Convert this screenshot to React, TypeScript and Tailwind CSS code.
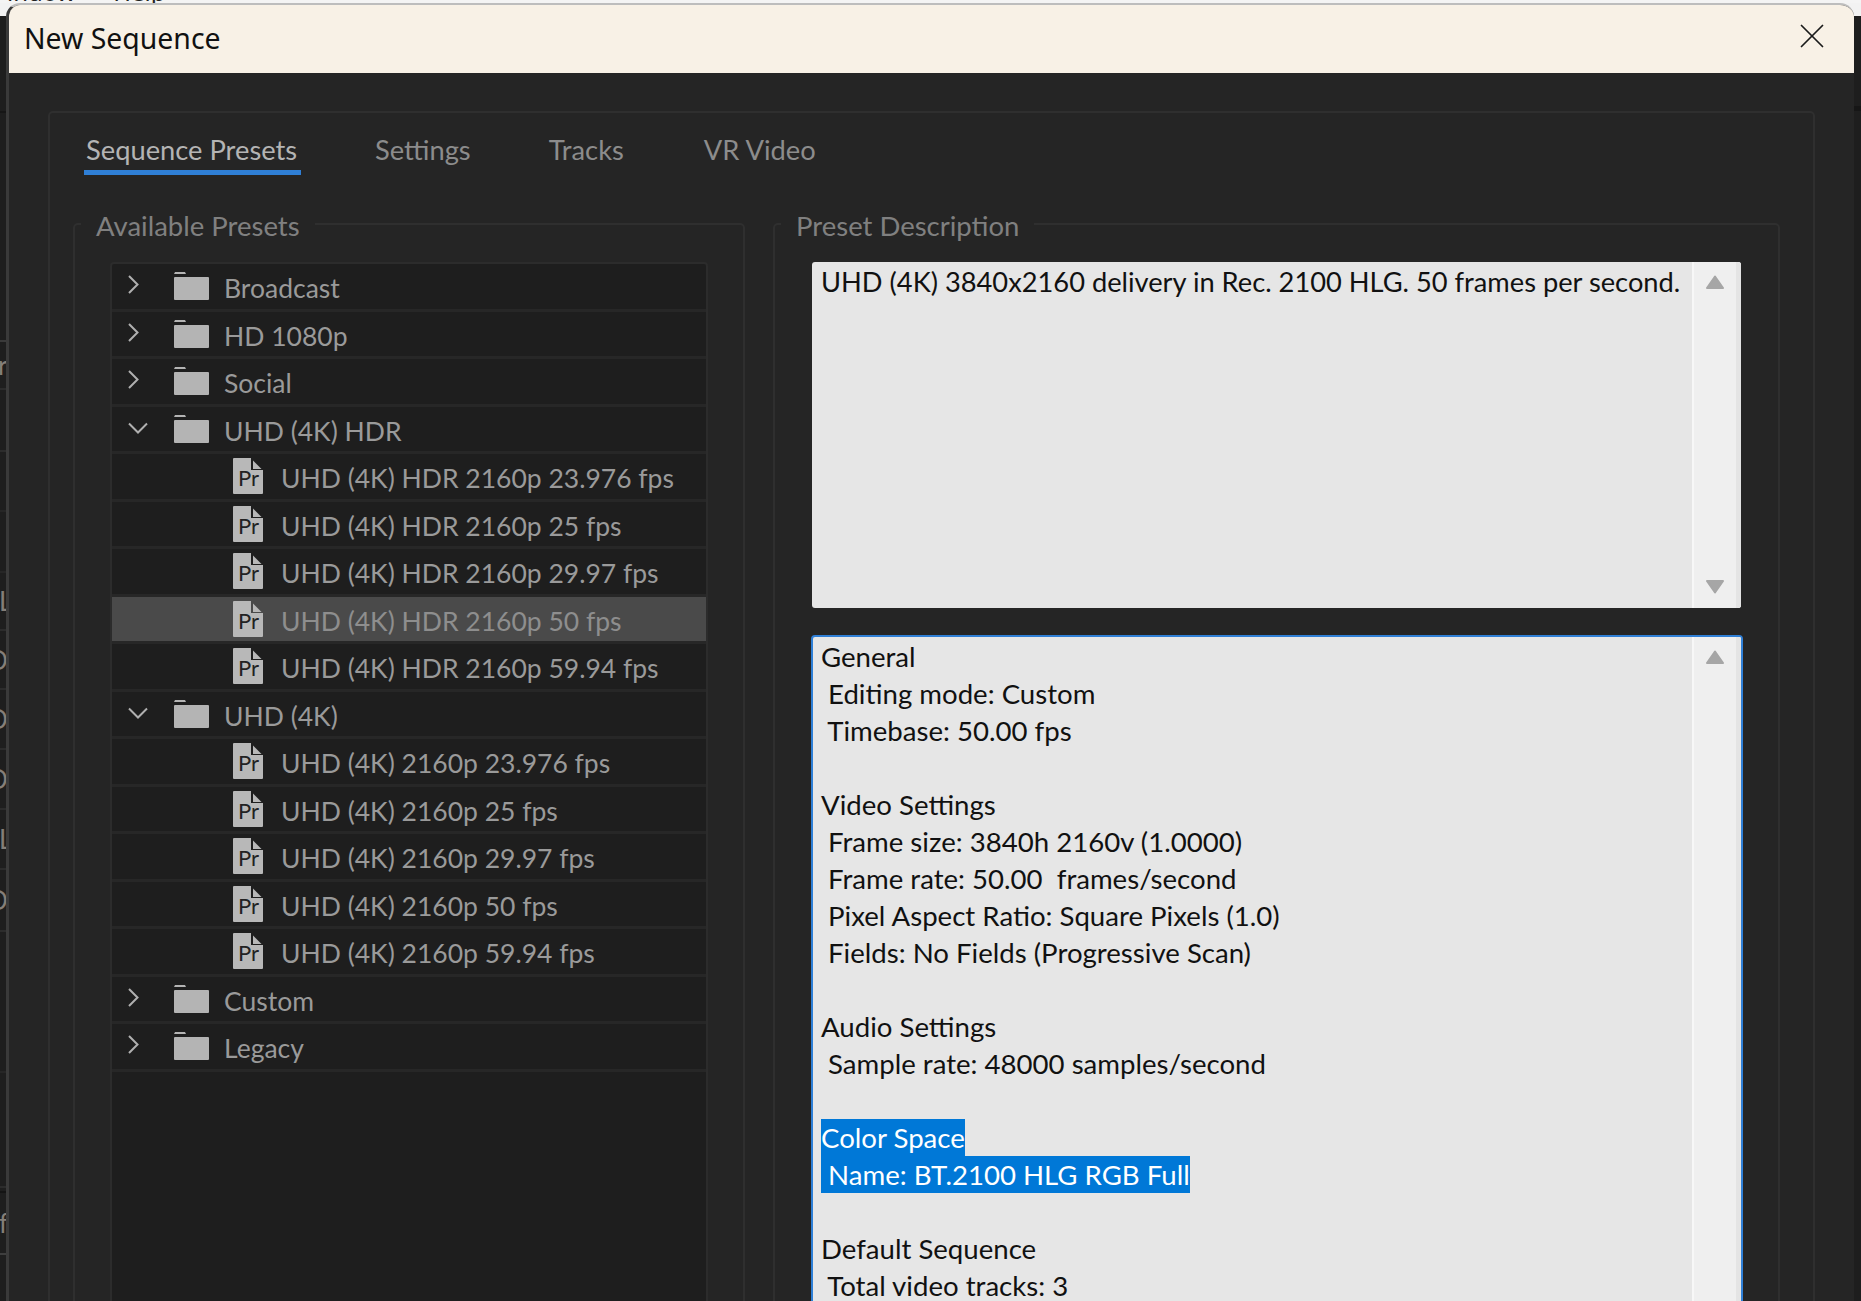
import { X } from "lucide-react";

type TreeRow = { label: string; kind: "closed" | "open" | "file"; selected?: boolean };

const tree: TreeRow[] = [
  { label: "Broadcast", kind: "closed" },
  { label: "HD 1080p", kind: "closed" },
  { label: "Social", kind: "closed" },
  { label: "UHD (4K) HDR", kind: "open" },
  { label: "UHD (4K) HDR 2160p 23.976 fps", kind: "file" },
  { label: "UHD (4K) HDR 2160p 25 fps", kind: "file" },
  { label: "UHD (4K) HDR 2160p 29.97 fps", kind: "file" },
  { label: "UHD (4K) HDR 2160p 50 fps", kind: "file", selected: true },
  { label: "UHD (4K) HDR 2160p 59.94 fps", kind: "file" },
  { label: "UHD (4K)", kind: "open" },
  { label: "UHD (4K) 2160p 23.976 fps", kind: "file" },
  { label: "UHD (4K) 2160p 25 fps", kind: "file" },
  { label: "UHD (4K) 2160p 29.97 fps", kind: "file" },
  { label: "UHD (4K) 2160p 50 fps", kind: "file" },
  { label: "UHD (4K) 2160p 59.94 fps", kind: "file" },
  { label: "Custom", kind: "closed" },
  { label: "Legacy", kind: "closed" },
];

const summary = [
  "General",
  " Editing mode: Custom",
  " Timebase: 50.00 fps",
  "",
  "Video Settings",
  " Frame size: 3840h 2160v (1.0000)",
  " Frame rate: 50.00  frames/second",
  " Pixel Aspect Ratio: Square Pixels (1.0)",
  " Fields: No Fields (Progressive Scan)",
  "",
  "Audio Settings",
  " Sample rate: 48000 samples/second",
  "",
  "Color Space",
  " Name: BT.2100 HLG RGB Full",
  "",
  "Default Sequence",
  " Total video tracks: 3",
  " Master track type: Stereo",
];

// rows of the app window behind the dialog, cut off by its left edge
const behind = [
  { h: 92, line: "border-[#1e1e1e]", ch: "", shift: 0 },
  { h: 5, line: "border-[#161616]", ch: "", shift: 0 },
  { h: 60, line: "border-[#1e1e1e]", ch: "", shift: 0 },
  { h: 169, line: "border-[#3a3a3a]", ch: "", shift: 0 },
  { h: 48, line: "border-[#2c2c2c]", ch: "r", shift: -2 },
  { h: 62, line: "border-[#2c2c2c]", ch: "", shift: 0 },
  { h: 60, line: "border-[#262626]", ch: "", shift: 0 },
  { h: 61, line: "border-[#262626]", ch: "", shift: 0 },
  { h: 58, line: "border-[#2c2c2c]", ch: "L", shift: -1 },
  { h: 59, line: "border-[#2c2c2c]", ch: "O", shift: -13 },
  { h: 60, line: "border-[#2c2c2c]", ch: "O", shift: -13 },
  { h: 60, line: "border-[#2c2c2c]", ch: "O", shift: -13 },
  { h: 60, line: "border-[#2c2c2c]", ch: "L", shift: -1 },
  { h: 62, line: "border-[#2c2c2c]", ch: "O", shift: -13 },
  { h: 141, line: "border-[#262626]", ch: "", shift: 0 },
  { h: 115, line: "border-[#2c2c2c]", ch: "", shift: 0 },
  { h: 5, line: "border-[#141414]", ch: "", shift: 0 },
  { h: 62, line: "border-[#3e3e3e]", ch: "f", shift: -1 },
  { h: 50, line: "border-[#1e1e1e]", ch: "", shift: 0 },
];

function Folder() {
  return (
    <svg width="35" height="28" viewBox="0 0 35 28" className="shrink-0">
      <path d="M1 0h10l1 2H0z" fill="#b4b4b4" />
      <path d="M1 5h33a1 1 0 0 1 1 1v21a1 1 0 0 1-1 1H1a1 1 0 0 1-1-1V6a1 1 0 0 1 1-1z" fill="#b4b4b4" />
    </svg>
  );
}

function PrFile() {
  return (
    <svg width="30" height="36" viewBox="0 0 30 36" className="shrink-0">
      <path d="M1 0h17v12h12v23a1 1 0 0 1-1 1H1a1 1 0 0 1-1-1V1a1 1 0 0 1 1-1z" fill="#b8b8b8" />
      <path d="M20 2.5l8.5 8.5H20z" fill="#b8b8b8" />
      <text x="5" y="28" fontSize="22" fill="#222222" fontFamily="Lato, sans-serif">Pr</text>
    </svg>
  );
}

function Chevron({ open }: { open: boolean }) {
  if (open) {
    return (
      <svg width="20" height="12" viewBox="0 0 20 12" className="ml-[16px] mr-[26px] mt-[-1px] shrink-0">
        <path d="M1 1.5l9 9 9-9" fill="none" stroke="#b0b0b0" strokeWidth="2" />
      </svg>
    );
  }
  return (
    <svg width="11" height="19" viewBox="0 0 11 19" className="ml-[16px] mr-[35px] mt-[-3px] shrink-0">
      <path d="M1 1l8.5 8.5L1 18" fill="none" stroke="#b0b0b0" strokeWidth="2" />
    </svg>
  );
}

function Row({ row }: { row: TreeRow }) {
  return (
    <div
      className={`flex h-[47.5px] items-center border-b-[3px] border-[#272727] text-[26.5px] ${row.selected ? "bg-[#4a4a4a]" : ""}`}
    >
      {row.kind === "file" ? (
        <>
          <div className="ml-[121px] mr-[18px] flex">
            <PrFile />
          </div>
          <span className={`mt-[5px] ${row.selected ? "text-[#8e8e8e]" : "text-[#9a9a9a]"}`}>{row.label}</span>
        </>
      ) : (
        <>
          <Chevron open={row.kind === "open"} />
          <Folder />
          <span className="ml-[15px] mt-[5px] text-[#9a9a9a]">{row.label}</span>
        </>
      )}
    </div>
  );
}

function Group({ title, className, children }: { title: string; className: string; children: React.ReactNode }) {
  return (
    <div className={`relative h-[1200px] rounded-[5px] border-2 border-[#2f2f2f] pt-[37px] ${className}`}>
      <div className="absolute left-[6px] top-[-18px] bg-[#252525] px-[15px] text-[27.5px] text-[#808080]">{title}</div>
      {children}
    </div>
  );
}

function ScrollColumn({ down }: { down?: boolean }) {
  return (
    <div className="flex w-[49px] shrink-0 flex-col items-center justify-between border-l-2 border-r-[5px] border-l-[#f7f7f7] border-r-[#e4e4e4] bg-[#efefef] pb-[14px] pt-[13px]">
      <svg width="18" height="14" viewBox="0 0 18 14">
        <path d="M9 1.5L17 13H1z" fill="#a6a6a6" stroke="#a6a6a6" strokeWidth="2" strokeLinejoin="round" />
      </svg>
      {down && (
        <svg width="18" height="14" viewBox="0 0 18 14">
          <path d="M9 12.5L17 1H1z" fill="#a6a6a6" stroke="#a6a6a6" strokeWidth="2" strokeLinejoin="round" />
        </svg>
      )}
    </div>
  );
}

export default function App() {
  return (
    <div className="flex h-[1301px] w-[1861px] flex-col overflow-hidden bg-[#f2f2f2] font-['Lato',sans-serif] text-[27px] leading-[37px]">
      <div className="h-[3px] shrink-0 overflow-hidden bg-[#f4f4f4] pl-[7px] font-['Noto_Sans',sans-serif] text-[24px] leading-[30px] text-[#222222]">
        <div className="mt-[-23px] whitespace-pre">indow      Help</div>
      </div>

      <div className="flex flex-1">
        <div className="mt-[13px] flex w-[6px] shrink-0 flex-col overflow-hidden bg-[#1e1e1e] text-[26px] leading-[30px] text-[#857f78]">
          {behind.map((b, i) => (
            <div key={i} style={{ height: b.h }} className={`flex shrink-0 items-center border-b-2 ${b.line}`}>
              {b.ch && (
                <span style={{ marginLeft: b.shift }} className="shrink-0">
                  {b.ch}
                </span>
              )}
            </div>
          ))}
        </div>

        <div className="flex flex-1 flex-col overflow-hidden rounded-t-[14px] border-l-[3px] border-t-[2px] border-l-[#3a3a3a] border-t-[#bdbdbd] bg-[#252525]">
          <div className="flex h-[68px] shrink-0 items-center justify-between bg-[#f8f1e6] pl-[15px] pr-[21px]">
            <span className="mt-[-2px] font-['Noto_Sans',sans-serif] text-[28.4px] text-[#111111]">New Sequence</span>
            <X size={42} strokeWidth={1} className="mt-[-6px] text-[#1a1a1a]" />
          </div>

          <div className="pl-[39px] pr-[39px] pt-[38px]">
            <div className="h-[1200px] rounded-[5px] border-2 border-[#2f2f2f] pl-[23px]">
              <div className="ml-[11px] flex h-[62px] items-end text-[27.3px]">
                <div className="flex h-[52px] w-[217px] border-b-[5px] border-[#2f7fd6] pl-[2px] pt-[8px] text-[#b4b4b4]">
                  Sequence Presets
                </div>
                <div className="ml-[74px] h-[52px] pt-[8px] text-[#8c8c8c]">Settings</div>
                <div className="ml-[78px] h-[52px] pt-[8px] text-[#8c8c8c]">Tracks</div>
                <div className="ml-[80px] h-[52px] pt-[8px] text-[#8c8c8c]">VR Video</div>
              </div>

              <div className="mt-[48px] flex gap-[28px]">
                <Group title="Available Presets" className="w-[672px] pl-[35px]">
                  <div className="h-[1100px] w-[598px] rounded-[4px] border-2 border-[#2c2c2c] bg-[#1e1e1e]">
                    {tree.map((row) => (
                      <Row key={row.label} row={row} />
                    ))}
                  </div>
                </Group>

                <Group title="Preset Description" className="w-[1007px] pl-[37px]">
                  <div className="flex h-[346px] w-[929px] overflow-hidden rounded-[3px] bg-[#e6e6e6] text-[27.25px] text-[#111111]">
                    <div className="flex-1 whitespace-pre pl-[9px] pt-[1px]">
                      UHD (4K) 3840x2160 delivery in Rec. 2100 HLG. 50 frames per second.
                    </div>
                    <ScrollColumn down />
                  </div>

                  <div className="ml-[-1px] mt-[27px] flex h-[800px] w-[932px] overflow-hidden rounded-[4px] border-2 border-[#2f7fd6] bg-[#e6e6e6] text-[27.6px] text-[#111111]">
                    <div className="flex-1 whitespace-pre pl-[8px] pt-[1px]">
                      {summary.map((line, i) => (
                        <div key={i} className="h-[37px]">
                          <span className={line.startsWith("Color") || line.includes("BT.2100") ? "inline-block h-[37px] bg-[#0078d7] text-white" : ""}>
                            {line}
                          </span>
                        </div>
                      ))}
                    </div>
                    <ScrollColumn />
                  </div>
                </Group>
              </div>
            </div>
          </div>
        </div>

        <div className="mt-[13px] w-[7px] shrink-0 bg-[#1e1e1e]">
          <div className="mt-[90px] h-[5px] bg-[#161616]" />
        </div>
      </div>
    </div>
  );
}
